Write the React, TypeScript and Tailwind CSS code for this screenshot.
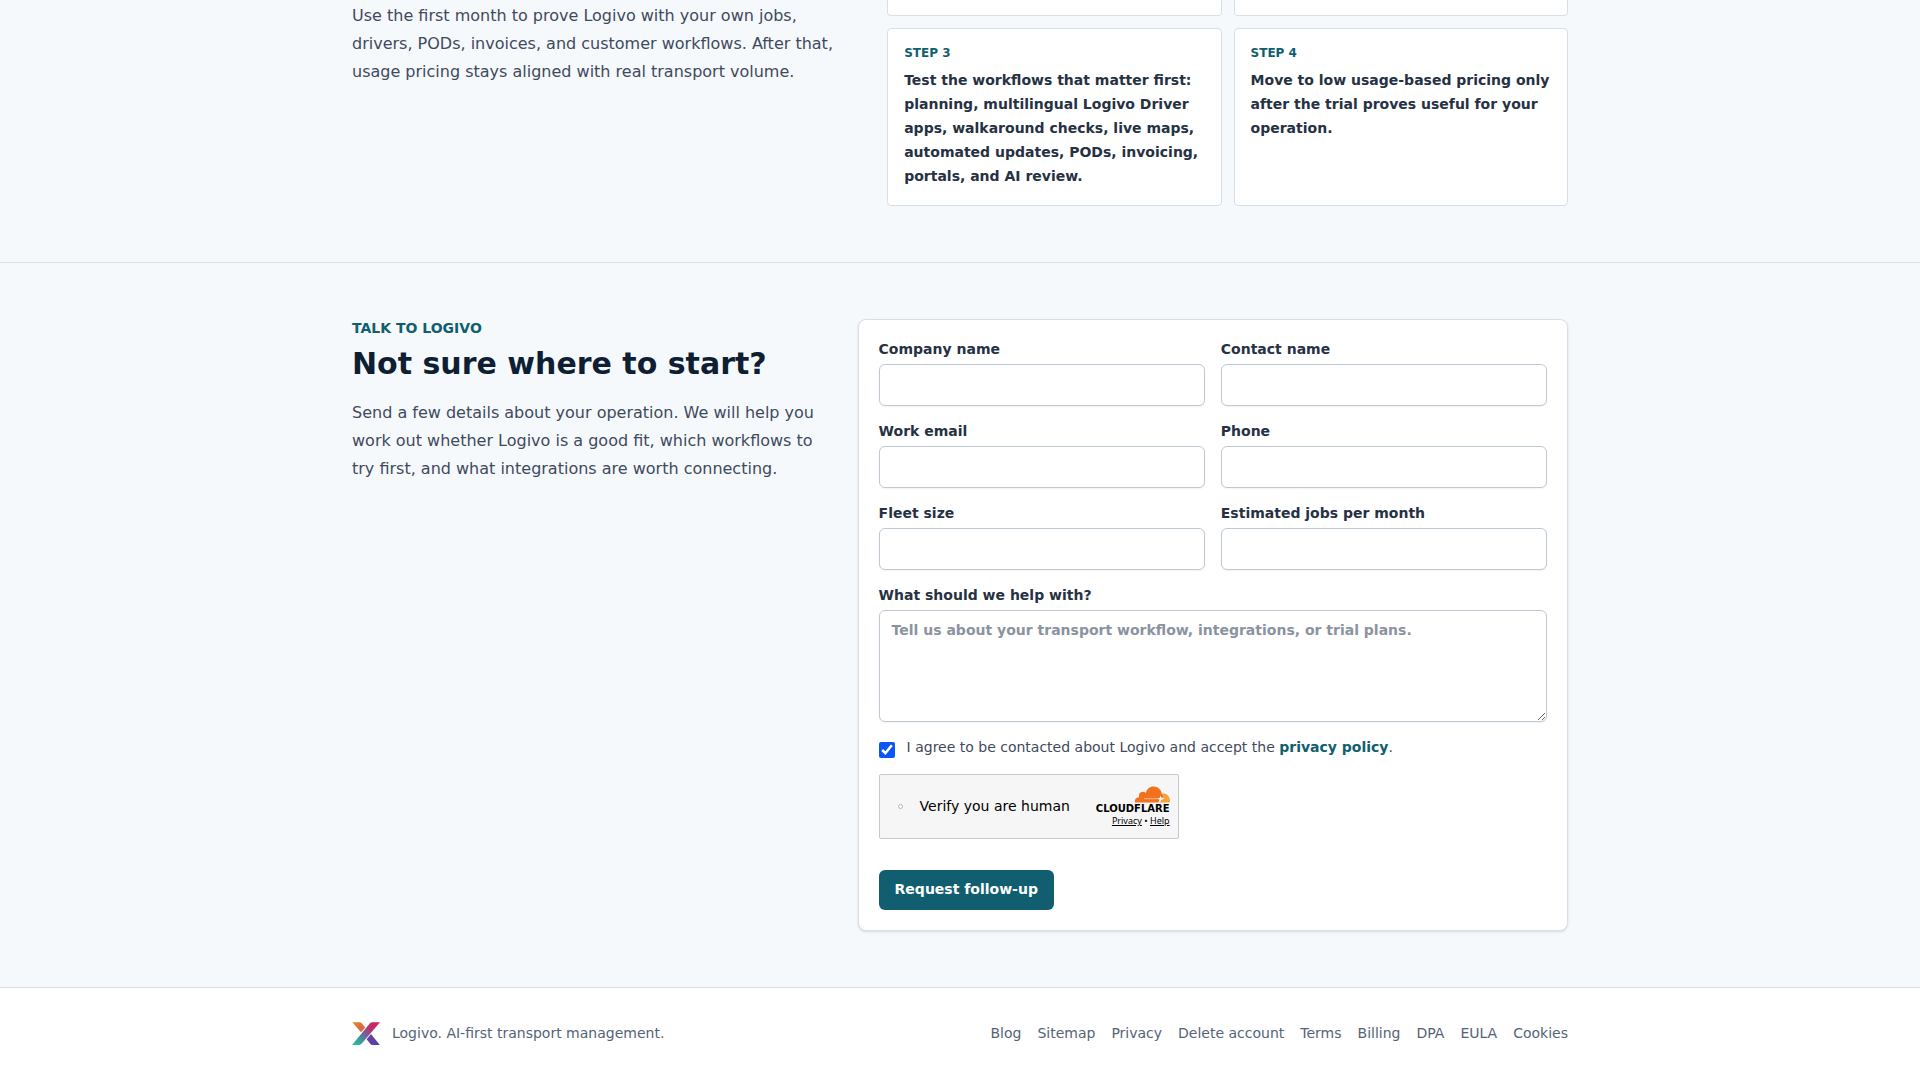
import React from "react";

const steps = [
  {
    title: "Step 3",
    text: "Test the workflows that matter first: planning, multilingual Logivo Driver apps, walkaround checks, live maps, automated updates, PODs, invoicing, portals, and AI review.",
  },
  {
    title: "Step 4",
    text: "Move to low usage-based pricing only after the trial proves useful for your operation.",
  },
];

const fields = [
  { id: "company", label: "Company name", type: "text" },
  { id: "contact", label: "Contact name", type: "text" },
  { id: "email", label: "Work email", type: "email" },
  { id: "phone", label: "Phone", type: "tel" },
  { id: "fleet", label: "Fleet size", type: "text" },
  { id: "jobs", label: "Estimated jobs per month", type: "text" },
];

const links = ["Blog", "Sitemap", "Privacy", "Delete account", "Terms", "Billing", "DPA", "EULA", "Cookies"];

function LogivoMark() {
  return (
    <svg viewBox="0 0 28 28" className="size-7" role="img" aria-label="Logivo">
      <defs>
        <linearGradient id="bar" x1="2" y1="25" x2="26" y2="3" gradientUnits="userSpaceOnUse">
          <stop offset="0" stopColor="#25c49a" />
          <stop offset="0.25" stopColor="#3a9a9c" />
          <stop offset="0.5" stopColor="#7d5a96" />
          <stop offset="0.75" stopColor="#c02c6c" />
          <stop offset="1" stopColor="#d81e5c" />
        </linearGradient>
        <linearGradient id="tl" x1="1" y1="3" x2="12" y2="12" gradientUnits="userSpaceOnUse">
          <stop offset="0" stopColor="#e08a26" />
          <stop offset="1" stopColor="#e0574a" />
        </linearGradient>
        <linearGradient id="br" x1="17" y1="16" x2="26" y2="25" gradientUnits="userSpaceOnUse">
          <stop offset="0" stopColor="#6a4298" />
          <stop offset="1" stopColor="#5040b0" />
        </linearGradient>
      </defs>
      <path d="M0.3 2.2H7.4Q8.8 2.2 9.7 3.2L13.2 7.4L9 12.2Z" fill="url(#tl)" />
      <path d="M20.2 2.2H28L9.8 23.6Q8.6 25 7 25H0L17.8 3.6Q18.8 2.2 20.2 2.2Z" fill="url(#bar)" />
      <path d="M19 14L27.8 25H20.6Q19.2 25 18.4 24L14.6 19.2Z" fill="url(#br)" />
    </svg>
  );
}

function CloudMark() {
  return (
    <svg viewBox="0 0 36 17" className="h-[17px] w-9" aria-hidden="true">
      <path d="M27 16.5V9C27.6 8 28.8 7.5 30 7.5C33.5 7.8 36 11 36 15.2Q36 16.5 35.2 16.5Z" fill="#f9a23b" />
      <path
        d="M1 16.5C.3 13.5 2.2 11.6 5 11.3C4.6 8.4 5.8 6 8.2 6C9.6 5.6 10.8 6 11.9 6.9C12.6 3 15.6.4 19.6.4C24 .4 27 3.4 27.8 7.6L29 10L27 16.5Z"
        fill="#f3701e"
      />
      <path d="M10 12.2H25V13.2H10Z" fill="#fbbf91" />
      <path d="M26.6 9.4L27.6 11.8L30.5 12.7L27.6 13.6L26.2 16.5H24.4L25.6 13.4L24 12.7L25.8 11.8Z" fill="#fff" />
    </svg>
  );
}

export default function App() {
  return (
    <div className="min-h-screen overflow-x-hidden bg-[#f5f9fc] font-['DejaVu_Sans',sans-serif] text-[#0f1f33]">
      <section className="border-b border-[#d8e0e7]">
        <div className="mx-auto grid max-w-7xl grid-cols-[8fr_11fr] gap-10 px-8 pb-14">
          <p className="pt-0.5 leading-7 text-[#3f4a5c]">
            Use the first month to prove Logivo with your own jobs, drivers, PODs, invoices, and customer workflows. After
            that, usage pricing stays aligned with real transport volume.
          </p>
          <div className="grid grid-cols-2 gap-3">
            <div className="h-4 rounded-b border border-t-0 border-[#d8e0e7] bg-white" />
            <div className="h-4 rounded-b border border-t-0 border-[#d8e0e7] bg-white" />
            {steps.map((s) => (
              <article key={s.title} className="rounded border border-[#d8e0e7] bg-white px-4 pt-4 pb-[17px]">
                <h3 className="text-xs font-bold uppercase text-[#115e70]">{s.title}</h3>
                <p className="mt-[7px] text-sm leading-6 font-semibold text-[#263143]">{s.text}</p>
              </article>
            ))}
          </div>
        </div>
      </section>

      <section className="border-b border-[#d8e0e7]">
        <div className="mx-auto grid max-w-7xl grid-cols-[2fr_3fr] gap-8 px-8 py-14">
          <div>
            <p className="text-sm leading-[18px] font-semibold uppercase text-[#115e70]">Talk to Logivo</p>
            <h2 className="mt-2 text-3xl leading-[38px] font-semibold">Not sure where to start?</h2>
            <p className="mt-4 leading-7 text-[#3f4a5c]">
              Send a few details about your operation. We will help you work out whether Logivo is a good fit, which
              workflows to try first, and what integrations are worth connecting.
            </p>
          </div>

          <form
            className="flex flex-col items-start gap-4 rounded-lg border border-[#d8e0e7] bg-white p-5 shadow-sm"
            onSubmit={(e) => e.preventDefault()}
          >
            <div className="grid w-full grid-cols-2 gap-4">
              {fields.map((f) => (
                <label key={f.id} htmlFor={f.id} className="block text-sm leading-[18px] font-semibold text-[#263143]">
                  {f.label}
                  <input
                    id={f.id}
                    type={f.type}
                    className="mt-1.5 block h-[42px] w-full rounded-md border border-[#bfc9d3] bg-white px-3 shadow-xs"
                  />
                </label>
              ))}
            </div>
            <label htmlFor="message" className="block w-full text-sm leading-[18px] font-semibold text-[#263143]">
              What should we help with?
              <textarea
                id="message"
                placeholder="Tell us about your transport workflow, integrations, or trial plans."
                className="mt-1.5 block h-28 w-full resize rounded-md border border-[#bfc9d3] bg-white px-3 py-2 leading-[22px] shadow-xs placeholder:text-[#8b93a0]"
              />
            </label>
            <div className="flex items-start gap-3 text-sm leading-[18px] text-[#3f4a5c]">
              <input id="agree" type="checkbox" defaultChecked className="mt-1 size-4 accent-[#0b57f5]" />
              <label htmlFor="agree">
                I agree to be contacted about Logivo and accept the{" "}
                <a href="#privacy" className="font-semibold text-[#115e70]">
                  privacy policy
                </a>
                .
              </label>
            </div>
            <div className="flex h-[65px] w-[300px] items-center rounded-xs border border-[#c8c8c8] bg-[#f6f6f6] pr-2 text-black">
              <span className="ml-[18px] size-[5px] rounded-full border border-[#b5b5b5] bg-white" />
              <span className="ml-[17px] pb-0.5 text-sm">Verify you are human</span>
              <div className="ml-auto flex flex-col items-end">
                <CloudMark />
                <span className="text-[10px] leading-3 font-bold">CLOUDFLARE</span>
                <span className="font-['Noto_Sans',sans-serif] text-[9px] leading-3">
                  <a href="#cf-privacy" className="underline">Privacy</a> • <a href="#cf-help" className="underline">Help</a>
                </span>
              </div>
            </div>
            <button
              type="submit"
              className="mt-[15px] h-10 rounded-md bg-[#115e70] px-4 pb-0.5 text-sm font-semibold text-white"
            >
              Request follow-up
            </button>
          </form>
        </div>
      </section>

      <footer className="bg-white">
        <div className="mx-auto flex max-w-7xl items-center justify-between px-8 py-8 text-sm text-[#556377]">
          <div className="flex items-center gap-3">
            <LogivoMark />
            <span className="pb-0.5">Logivo. AI-first transport management.</span>
          </div>
          <nav className="flex gap-4 pb-0.5">
            {links.map((l) => (
              <a key={l} href="#footer">
                {l}
              </a>
            ))}
          </nav>
        </div>
      </footer>
    </div>
  );
}
